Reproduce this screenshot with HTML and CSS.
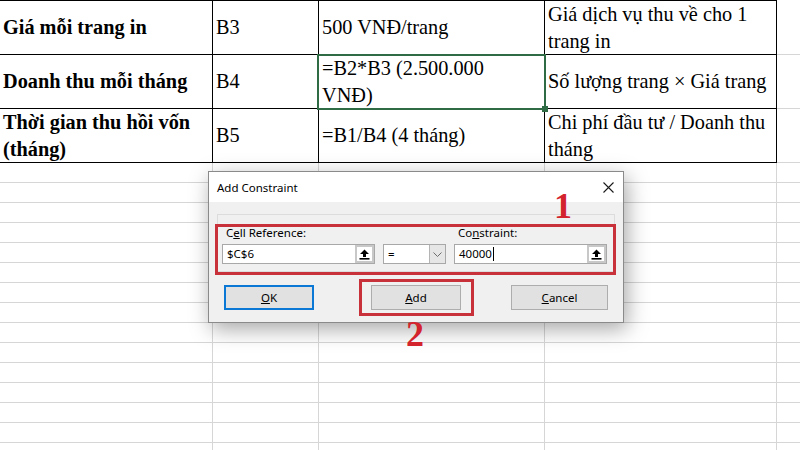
FILE: index.html
```html
<!DOCTYPE html>
<html lang="vi">
<head>
<meta charset="utf-8">
<title>Add Constraint</title>
<link rel="stylesheet" href="styles.css">
</head>
<body>
<div class="sheet">
  <div class="top">
    <div class="table">
      <div class="cell bold">Giá mỗi trang in</div>
      <div class="cell">B3</div>
      <div class="cell">500 VNĐ/trang</div>
      <div class="cell">Giá dịch vụ thu về cho 1<br>trang in</div>

      <div class="cell bold">Doanh thu mỗi tháng</div>
      <div class="cell">B4</div>
      <div class="cell">=B2*B3 (2.500.000<br>VNĐ)</div>
      <div class="cell">Số lượng trang × Giá trang</div>

      <div class="cell bold">Thời gian thu hồi vốn<br>(tháng)</div>
      <div class="cell">B5</div>
      <div class="cell">=B1/B4 (4 tháng)</div>
      <div class="cell">Chi phí đầu tư / Doanh thu<br>tháng</div>
    </div>
    <div class="filler">
      <div class="frow"></div>
      <div class="frow"></div>
      <div class="frow"></div>
    </div>
  </div>
  <div class="grid">
    <div class="gcol w1"></div>
    <div class="gcol w2"></div>
    <div class="gcol w3"></div>
    <div class="gcol w4"></div>
    <div class="gcol last"></div>
  </div>

  <div class="selection"><span class="handle"></span></div>

  <div class="dialog">
    <div class="titlebar">
      <span class="title">Add Constraint</span>
      <svg class="close" width="11" height="11" viewBox="0 0 11 11"><path d="M0.5 0.5 L10.5 10.5 M10.5 0.5 L0.5 10.5" stroke="#1a1a1a" stroke-width="1.1" fill="none"/></svg>
    </div>
    <div class="dbody">
      <div class="group">
        <span class="lbl">C<u>e</u>ll Reference:</span>
        <span></span>
        <span class="lbl">Co<u>n</u>straint:</span>

        <div class="field">
          <span class="val">$C$6</span>
          <span class="refbtn"><svg width="11" height="11" viewBox="0 0 11 11"><path d="M5.5 0.5 L10 5 H7 V8 H4 V5 H1 Z" fill="#000"/><rect x="0.5" y="9" width="10" height="1.6" fill="#000"/></svg></span>
        </div>
        <div class="combo">
          <span class="val">=</span>
          <span class="drop"><svg width="9" height="5" viewBox="0 0 9 5"><path d="M0.5 0.5 L4.5 4.5 L8.5 0.5" stroke="#6d6d6d" stroke-width="1" fill="none"/></svg></span>
        </div>
        <div class="field">
          <span class="val">40000<span class="caret"></span></span>
          <span class="refbtn"><svg width="11" height="11" viewBox="0 0 11 11"><path d="M5.5 0.5 L10 5 H7 V8 H4 V5 H1 Z" fill="#000"/><rect x="0.5" y="9" width="10" height="1.6" fill="#000"/></svg></span>
        </div>
      </div>
      <div class="buttons">
        <button class="btn ok"><u>O</u>K</button>
        <button class="btn add"><u>A</u>dd</button>
        <button class="btn cancel"><u>C</u>ancel</button>
      </div>
    </div>
  </div>

  <div class="mark box1"></div>
  <div class="mark box2"></div>
  <div class="num n1">1</div>
  <div class="num n2">2</div>
</div>
</body>
</html>
```

FILE: styles.css
```css
* { box-sizing: border-box; }
html, body { margin: 0; padding: 0; background: #fff; }
.sheet {
  position: relative;
  width: 800px;
  height: 450px;
  overflow: hidden;
  background: #fff;
}
.top { display: flex; }
.table {
  display: grid;
  grid-template-columns: 213px 106px 226px 232px;
  grid-auto-rows: 54px;
  border-top: 1px solid #000;
  font-family: "Liberation Serif", "Times New Roman", serif;
  font-size: 20.3px;
  line-height: 26.5px;
  color: #000;
}
.cell {
  display: flex;
  align-items: center;
  padding-left: 3px;
  border-right: 1px solid #000;
  border-bottom: 1px solid #000;
  white-space: nowrap;
  overflow: hidden;
}
.cell.bold { font-weight: bold; }
.filler { flex: 1; display: flex; flex-direction: column; }
.frow { height: 54px; border-bottom: 1px solid #d6d6d6; }
.frow:first-child { height: 55px; }

.grid { display: flex; height: 287px; }
.gcol {
  height: 100%;
  background: repeating-linear-gradient(to bottom, transparent 0 19px, #d6d6d6 19px 20px);
}
.gcol.w1 { width: 213px; border-right: 1px solid #d6d6d6; }
.gcol.w2 { width: 106px; border-right: 1px solid #d6d6d6; }
.gcol.w3 { width: 226px; border-right: 1px solid #d6d6d6; }
.gcol.w4 { width: 232px; border-right: 1px solid #d6d6d6; }
.gcol.last { flex: 1; }

.selection {
  position: absolute;
  left: 317px;
  top: 54px;
  width: 229px;
  height: 56px;
  border: 2px solid #2f6b45;
}
.handle {
  position: absolute;
  right: -4px;
  bottom: -4px;
  width: 6px;
  height: 6px;
  background: #2f6b45;
}

.dialog {
  position: absolute;
  left: 208px;
  top: 171px;
  width: 416px;
  height: 152px;
  border: 1px solid #8a8a8a;
  background: #f0f0f0;
  box-shadow: 3px 6px 20px rgba(0, 0, 0, 0.35);
  font-family: "Noto Sans", "Open Sans", sans-serif;
  font-size: 11.5px;
  color: #000;
  display: flex;
  flex-direction: column;
}
.titlebar {
  height: 30px;
  background: #fff;
  display: flex;
  align-items: center;
  justify-content: space-between;
  padding: 0 9px 0 8px;
}
.title { font-size: 11.5px; }
.dbody { flex: 1; padding: 12px 8px 0 8px; }
.group {
  border: 1px solid #dcdcdc;
  padding: 10px 4px 7px 4px;
  display: grid;
  grid-template-columns: 153px 63px 153px;
  column-gap: 8px;
  row-gap: 3px;
}
.lbl { padding-left: 4px; line-height: 16px; height: 16px; }
.field, .combo {
  height: 20px;
  background: #fff;
  border: 1px solid #a8a8a8;
  display: flex;
  align-items: stretch;
}
.val {
  flex: 1;
  display: flex;
  align-items: center;
  padding-left: 4px;
  line-height: 16px;
}
.caret {
  display: inline-block;
  width: 1px;
  height: 14px;
  background: #000;
  margin-left: 1px;
}
.refbtn {
  width: 19px;
  border: 2px solid #c8c8c8;
  background: #fff;
  display: flex;
  align-items: center;
  justify-content: center;
}
.drop {
  width: 16px;
  background: #e6e6e6;
  border-left: 1px solid #b4b4b4;
  display: flex;
  align-items: center;
  justify-content: center;
}
.buttons { display: flex; margin-top: 13px; padding-left: 7px; }
.btn {
  height: 25px;
  background: #e1e1e1;
  border: 1px solid #adadad;
  font-family: "Noto Sans", "Open Sans", sans-serif;
  font-size: 11.5px;
  color: #000;
  padding: 0;
}
.btn.ok { width: 90px; border: 2px solid #0a78d4; }
.btn.add { width: 90px; margin-left: 57px; }
.btn.cancel { width: 97px; margin-left: 50px; }

.mark {
  position: absolute;
  border: 3px solid #c8303a;
}
.box1 { left: 215px; top: 224px; width: 401px; height: 51px; }
.box2 { left: 359px; top: 279px; width: 115px; height: 37px; }
.num {
  position: absolute;
  font-family: "Liberation Serif", "Times New Roman", serif;
  font-weight: bold;
  font-size: 36px;
  line-height: 36px;
  color: #d3232c;
}
.n1 { left: 554px; top: 188px; }
.n2 { left: 406px; top: 316px; }
```
